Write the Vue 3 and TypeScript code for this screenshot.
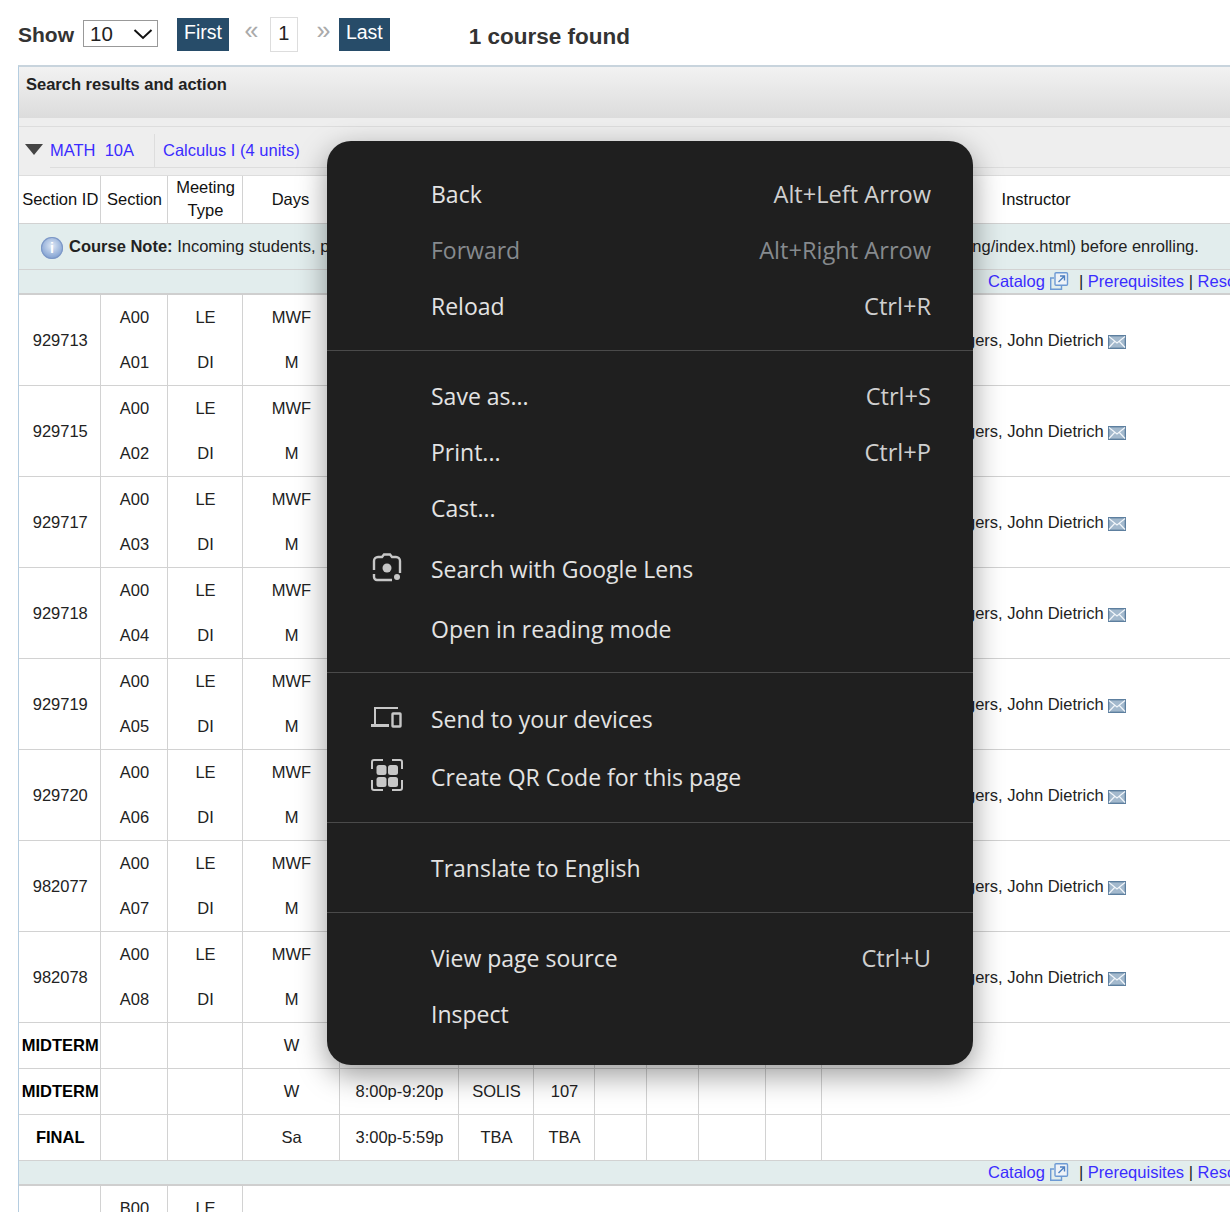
<script setup lang="ts">
interface Course {
  id: string;
  section: string;
}

const sections: Course[] = [
  { id: '929713', section: 'A01' },
  { id: '929715', section: 'A02' },
  { id: '929717', section: 'A03' },
  { id: '929718', section: 'A04' },
  { id: '929719', section: 'A05' },
  { id: '929720', section: 'A06' },
  { id: '982077', section: 'A07' },
  { id: '982078', section: 'A08' }
];

const colWidths = [81, 67, 75, 97, 119, 75, 61, 52, 52, 67, 56, 430];

const exams = [
  { name: 'MIDTERM', day: 'W', time: '', bld: '', room: '' },
  { name: 'MIDTERM', day: 'W', time: '8:00p-9:20p', bld: 'SOLIS', room: '107' },
  { name: 'FINAL', day: 'Sa', time: '3:00p-5:59p', bld: 'TBA', room: 'TBA' }
];

const menuGroups = [
  [
    { label: 'Back', key: 'Alt+Left Arrow' },
    { label: 'Forward', key: 'Alt+Right Arrow', off: true },
    { label: 'Reload', key: 'Ctrl+R' }
  ],
  [
    { label: 'Save as...', key: 'Ctrl+S' },
    { label: 'Print...', key: 'Ctrl+P' },
    { label: 'Cast...', gap: true },
    { label: 'Search with Google Lens', icon: 'lens', tall: true },
    { label: 'Open in reading mode', tall: true }
  ],
  [
    { label: 'Send to your devices', icon: 'devices', tall: true },
    { label: 'Create QR Code for this page', icon: 'qr' }
  ],
  [{ label: 'Translate to English' }],
  [
    { label: 'View page source', key: 'Ctrl+U' },
    { label: 'Inspect' }
  ]
];
</script>

<template>
  <div class="page">
    <div class="pager">
      <span class="show">Show</span>
      <div class="select">
        <span>10</span>
        <svg width="20" height="12" viewBox="0 0 20 12"><path d="M1.5 2l8.5 8 8.5-8" fill="none" stroke="#111" stroke-width="2" /></svg>
      </div>
      <a class="btn first">First</a>
      <span class="arrow prev">«</span>
      <span class="current">1</span>
      <span class="arrow next">»</span>
      <a class="btn">Last</a>
      <span class="found">1 course found</span>
    </div>

    <div class="results">
      <div class="results-head">Search results and action</div>
      <div class="course-row">
        <span class="triangle"></span>
        <div class="course-links">
          <a class="code">MATH&nbsp; 10A</a>
          <a class="title">Calculus I (4 units)</a>
        </div>
      </div>

      <table>
        <colgroup>
          <col v-for="(w, i) in colWidths" :key="i" :style="{ width: `${w}px` }" />
        </colgroup>
        <thead>
          <tr class="head">
            <th>Section ID</th>
            <th>Section</th>
            <th>Meeting<br />Type</th>
            <th>Days</th>
            <th></th>
            <th></th>
            <th></th>
            <th></th>
            <th></th>
            <th></th>
            <th></th>
            <th>Instructor</th>
          </tr>
        </thead>
        <tbody>
          <tr class="note">
            <td colspan="12">
              <span class="info"><i>i</i></span>
              <b>Course Note:</b> Incoming students, please review the Math Placement requirement on (https://math.ucsd.edu/placement-testing/index.html) before enrolling.
            </td>
          </tr>
          <tr class="links">
            <td colspan="12">
              <a>Catalog</a>
              <svg class="ext" width="20" height="20" viewBox="0 0 20 20" fill="none" stroke="#6d9ad4" stroke-width="1.4">
                <path d="M5 7H1.700v11.300H12.500V15" />
                <rect x="6" y="1.700" width="12.500" height="12.500" rx="1" fill="#eef3f8" />
                <path d="M9.500 11l5.500-5.500M11 5h4.500v4.500" stroke="#4d7fc0" />
              </svg>
              <span class="bar first-bar">|</span> <a>Prerequisites</a> <span class="bar">|</span> <a>Resources</a>
            </td>
          </tr>
          <template v-for="row in sections" :key="row.id">
            <tr class="sub top">
              <td rowspan="2" class="sec-id">{{ row.id }}</td>
              <td>A00</td>
              <td>LE</td>
              <td>MWF</td>
              <td colspan="7" rowspan="2"></td>
              <td rowspan="2" class="teacher">
                Eggers, John Dietrich
                <svg class="mail" width="18" height="14" viewBox="0 0 19 14" preserveAspectRatio="none">
                  <rect x="0.700" y="0.700" width="17.600" height="12.600" fill="#a3b9cd" stroke="#5d7f9f" stroke-width="1.400" />
                  <path d="M1 1.500l8.500 6.500L18 1.500M1 12.500l6-6M18 12.500l-6-6" fill="none" stroke="#f2f6fa" stroke-width="1.200" />
                </svg>
              </td>
            </tr>
            <tr class="sub bottom">
              <td>{{ row.section }}</td>
              <td>DI</td>
              <td>M</td>
            </tr>
          </template>
          <tr v-for="(exam, i) in exams" :key="i" class="exam">
            <td><b>{{ exam.name }}</b></td>
            <td></td>
            <td></td>
            <td>{{ exam.day }}</td>
            <td>{{ exam.time }}</td>
            <td>{{ exam.bld }}</td>
            <td>{{ exam.room }}</td>
            <td></td>
            <td></td>
            <td></td>
            <td></td>
            <td></td>
          </tr>
          <tr class="links">
            <td colspan="12">
              <a>Catalog</a>
              <svg class="ext" width="20" height="20" viewBox="0 0 20 20" fill="none" stroke="#6d9ad4" stroke-width="1.4">
                <path d="M5 7H1.700v11.300H12.500V15" />
                <rect x="6" y="1.700" width="12.500" height="12.500" rx="1" fill="#eef3f8" />
                <path d="M9.500 11l5.500-5.500M11 5h4.500v4.500" stroke="#4d7fc0" />
              </svg>
              <span class="bar first-bar">|</span> <a>Prerequisites</a> <span class="bar">|</span> <a>Resources</a>
            </td>
          </tr>
          <tr class="sub">
            <td></td>
            <td>B00</td>
            <td>LE</td>
            <td colspan="9"></td>
          </tr>
        </tbody>
      </table>
    </div>

    <!-- right click menu -->
    <div class="menu">
      <div v-for="(group, g) in menuGroups" :key="g" class="menu-group">
        <div
          v-for="item in group"
          :key="item.label"
          class="menu-item"
          :class="{ off: item.off, tall: item.tall, gap: item.gap }"
        >
          <span class="gutter">
            <svg v-if="item.icon === 'lens'" width="32" height="32" viewBox="0 0 32 32" fill="none" stroke="#c7c7c7" stroke-width="2.400">
              <path d="M3 17V8a4 4 0 0 1 4-4h4l2-2.500h6l2 2.500h4a4 4 0 0 1 4 4v12" />
              <path d="M3 21v3a3 3 0 0 0 3 3h15" />
              <circle cx="16" cy="15" r="4.500" fill="#c7c7c7" stroke="none" />
              <circle cx="26" cy="24" r="3" fill="#c7c7c7" stroke="none" />
            </svg>
            <svg v-else-if="item.icon === 'devices'" width="32" height="32" viewBox="0 0 32 32" fill="none" stroke="#c7c7c7" stroke-width="2">
              <path d="M4 21V5h23" />
              <path d="M0 22.500h18" stroke-width="3" />
              <rect x="21.500" y="10.500" width="8" height="13" rx="0.500" stroke-width="2.400" />
            </svg>
            <svg v-else-if="item.icon === 'qr'" class="qr-ic" width="32" height="32" viewBox="0 0 32 32" fill="none" stroke="#c7c7c7" stroke-width="2">
              <path d="M1 10V3a2 2 0 0 1 2-2h9M21 1h8a2 2 0 0 1 2 2v7M31 21v8a2 2 0 0 1-2 2h-8M12 31H3a2 2 0 0 1-2-2v-8" />
              <rect x="5.500" y="6" width="10" height="10" rx="2.500" fill="#c7c7c7" stroke="none" />
              <rect x="17" y="6" width="10" height="10" rx="2.500" fill="#c7c7c7" stroke="none" />
              <rect x="5.500" y="18" width="10" height="10" rx="2.500" fill="#c7c7c7" stroke="none" />
              <rect x="17" y="18" width="10" height="10" rx="2.500" fill="#c7c7c7" stroke="none" />
            </svg>
          </span>
          <span class="label">{{ item.label }}</span>
          <span v-if="item.key" class="key">{{ item.key }}</span>
        </div>
      </div>
    </div>
  </div>
</template>

<style>
html,
body {
  margin: 0;
  overflow: hidden;
  background: #fff;
}
</style>

<style scoped>
.page {
  position: relative;
  width: 1230px;
  height: 1212px;
  overflow: hidden;
  font-family: "Liberation Sans", Arial, sans-serif;
  font-size: 16.500px;
  color: #222;
  background: #fff;
}

/* pager */
.pager {
  display: flex;
  align-items: flex-start;
  height: 65px;
  padding: 17px 0 0 18px;
  box-sizing: border-box;
}

.show {
  margin-top: 6px;
  width: 65px;
  font-size: 21px;
  font-weight: bold;
  color: #333;
}

.select {
  display: flex;
  align-items: center;
  justify-content: space-between;
  width: 75px;
  height: 27px;
  margin-top: 3px;
  padding: 0 4px 0 6px;
  box-sizing: border-box;
  border: 1px solid #999;
  font-size: 20.500px;
}

.btn {
  height: 33px;
  margin-top: 1px;
  padding: 0 7px;
  background: #274c69;
  color: #fff;
  font-size: 19.500px;
  line-height: 28px;
}

.first {
  margin-left: 19px;
}

.arrow {
  width: 25px;
  font-size: 25px;
  line-height: 26px;
  color: #aaa;
  text-align: center;
}

.prev {
  margin-left: 10px;
  margin-right: 6px;
}

.next {
  margin-left: 13px;
  margin-right: 3px;
}

.current {
  width: 28px;
  height: 35px;
  box-sizing: border-box;
  border: 1px solid #ddd;
  text-align: center;
  font-size: 20px;
  line-height: 30px;
}

.found {
  margin-left: 79px;
  margin-top: 7px;
  font-size: 22.500px;
  font-weight: bold;
  color: #333;
}

/* results */
.results {
  margin-left: 18px;
  border-top: 2px solid #c8d4dd;
  border-left: 1px solid #b5cde0;
}

.results-head {
  height: 59px;
  padding: 8px 0 0 7px;
  box-sizing: border-box;
  background: #eee linear-gradient(#f2f2f2, #dcdcdc) no-repeat 0 0 / 100% 51px;
  font-weight: bold;
  color: #222;
}

.course-row {
  display: flex;
  align-items: flex-start;
  height: 50px;
  padding-left: 6px;
  box-sizing: border-box;
  border-top: 1px solid #ddd;
  border-bottom: 1px solid #ddd;
  background: #eee;
}

.triangle {
  width: 0;
  height: 0;
  margin-top: 17px;
  border-left: 9px solid transparent;
  border-right: 9px solid transparent;
  border-top: 11px solid #444;
}

.course-links {
  display: flex;
  flex: 1;
  height: 33px;
  margin-top: 7px;
  margin-left: 7px;
  border-bottom: 1px solid #ddd;
}

.course-links a {
  color: #3a2cff;
  line-height: 33px;
}

.code {
  width: 104px;
  border-right: 1px solid #ddd;
}

.title {
  padding-left: 8px;
}

table {
  table-layout: fixed;
  width: 1232px;
  border-collapse: collapse;
  color: #222;
}

td,
th {
  padding: 0;
  border: 1px solid #d2d2d2;
  text-align: center;
  font-weight: normal;
  vertical-align: middle;
  box-sizing: border-box;
}

tbody td {
  padding-left: 2px;
}

th:nth-child(-n + 3) {
  padding-left: 2px;
}

.sec-id,
.teacher {
  padding-top: 2px;
}

.teacher {
  padding-left: 0;
}

tr > :first-child {
  border-left: 0;
}

thead th {
  border-top: 0;
  color: #111;
  line-height: 23px;
}

.head {
  height: 47px;
}

.note {
  height: 46px;
}

.note td {
  padding-top: 3px;
  padding-left: 22px;
  background: #e2eded;
  text-align: left;
  white-space: nowrap;
}

.info {
  display: inline-block;
  width: 22px;
  height: 22px;
  margin-right: 6px;
  border-radius: 50%;
  vertical-align: middle;
  background: radial-gradient(circle at 50% 40%, #dfe9f6, #7f9fd0 75%);
  box-shadow: inset 0 0 0 1px #7c97c6;
  text-align: center;
  line-height: 22px;
  font-size: 14px;
  font-weight: bold;
  color: #fff;
}

.info i {
  font-style: normal;
}

.links {
  height: 25px;
}

.links td {
  padding-left: 969px;
  background: #e2eded;
  text-align: left;
  white-space: nowrap;
  border-bottom: 2px solid #cfcfcf;
  line-height: 20px;
}

.links a {
  color: #3a2cff;
}

.ext {
  margin-left: 4px;
  vertical-align: -4px;
}

.first-bar {
  margin-left: 10px;
}

.sub {
  height: 45.500px;
}

.top > td:not([rowspan]) {
  border-bottom: 0;
}

.bottom > td {
  border-top: 0;
}

.exam {
  height: 46px;
}

.exam b {
  color: #000;
}

.mail {
  vertical-align: -3px;
}

/* context menu */
.menu {
  position: absolute;
  top: 141px;
  left: 327px;
  width: 646px;
  height: 924px;
  box-sizing: border-box;
  border-radius: 24px;
  background: #1f1f1f;
  box-shadow: 0 10px 30px rgba(0, 0, 0, 0.4);
  color: #e3e3e3;
  font-family: "Open Sans", "Noto Sans", sans-serif;
  font-size: 23px;
}

.menu-group {
  padding: 18px 0 15px;
  border-bottom: 1px solid #4a4a4a;
}

.menu-group:first-child {
  padding-top: 26px;
}

.menu-group:nth-child(2) {
  padding-bottom: 12px;
}

.menu-group:nth-child(3) {
  padding-top: 17px;
  padding-bottom: 16px;
}

.menu-group:last-child {
  border-bottom: 0;
}

.menu-item {
  display: flex;
  align-items: center;
  height: 56px;
  padding-right: 42px;
  padding-bottom: 2px;
  box-sizing: border-box;
}

.tall {
  height: 60px;
}

.gap {
  margin-bottom: 3px;
}

.gutter {
  display: flex;
  align-items: flex-start;
  width: 32px;
  margin-left: 44px;
  margin-right: 28px;
}

.qr-ic {
  margin-top: -4px;
}

.label {
  flex: 1;
}

.key {
  color: #cfcfcf;
  font-size: 23.600px;
}

.off {
  color: #868a8e;
}

.off .key {
  color: #868a8e;
}
</style>
